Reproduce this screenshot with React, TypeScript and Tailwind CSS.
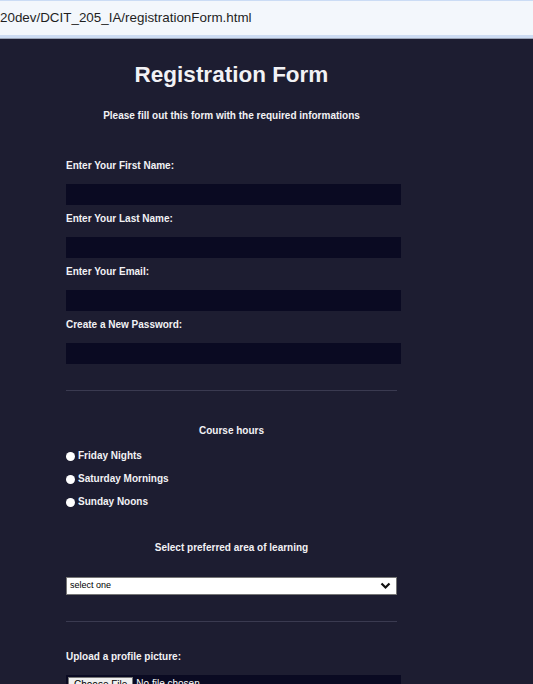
import { useState } from "react";

const textCls = "block text-[10px] leading-[14px] font-bold text-[#f2f2f5]";

/** Address bar strip from the browser chrome. */
function AddressBar() {
  return (
    <div className="border-t border-[#cbdcf5]">
      <div className="h-[34px] bg-[#f3f7fc] flex items-center text-[13.4px] text-[#1f1f1f] [font-family:'Liberation_Sans',sans-serif] whitespace-nowrap">
        20dev/DCIT_205_IA/registrationForm.html
      </div>
      <div className="h-[4px] bg-[#cddcf3] border-b border-[#9aa3b5]" />
    </div>
  );
}

function TextField({ label, type = "text" }: { label: string; type?: string }) {
  return (
    <div>
      <label className={textCls}>{label}</label>
      <input
        type={type}
        className="mt-[11px] block w-[335px] h-[21px] bg-[#0a0a22] outline-none"
      />
    </div>
  );
}

export default function App() {
  const [hours, setHours] = useState("");

  return (
    <div className="w-[533px] h-[684px] overflow-hidden bg-[#1d1d31]">
      <AddressBar />
      <div className="ml-[66px] w-[331px] pt-[21px] text-[#f2f2f5] [font-family:'Liberation_Sans',Arial,sans-serif]">
        <h1 className="text-center text-[22.5px] font-bold leading-[30px]">
          Registration Form
        </h1>
        <p className={"mt-[19px] text-center " + textCls}>
          Please fill out this form with the required informations
        </p>

        <div className="mt-[36px] flex flex-col gap-[7px]">
          <TextField label="Enter Your First Name:" />
          <TextField label="Enter Your Last Name:" />
          <TextField label="Enter Your Email:" type="email" />
          <TextField label="Create a New Password:" type="password" />
        </div>

        <hr className="mt-[26px] border-t border-[#3a3a50]" />

        <p className={"mt-[33px] text-center " + textCls}>Course hours</p>
        <div className="mt-[11px] flex flex-col gap-[9px]">
          {["Friday Nights", "Saturday Mornings", "Sunday Noons"].map((h) => (
            <label
              key={h}
              onClick={() => setHours(h)}
              className={"flex items-center gap-[3px] " + textCls}
            >
              <span className="w-[9px] h-[9px] rounded-full bg-white flex items-center justify-center">
                {hours === h && (
                  <span className="w-[5px] h-[5px] rounded-full bg-[#1d1d31]" />
                )}
              </span>
              {h}
            </label>
          ))}
        </div>

        <p className={"mt-[32px] text-center " + textCls}>
          Select preferred area of learning
        </p>
        <div className="mt-[22px] relative h-[18px] bg-white border border-[#767676] flex items-center">
          <span className="pl-[3px] text-[9px] text-black">select one</span>
          <svg
            className="absolute right-[5px] top-[4px]"
            width="11"
            height="8"
            viewBox="0 0 11 8"
          >
            <path
              d="M1.5 1.5 L5.5 5.5 L9.5 1.5"
              stroke="#111"
              strokeWidth="2.2"
              fill="none"
            />
          </svg>
        </div>

        <hr className="mt-[26px] border-t border-[#3a3a50]" />

        <label className={"mt-[28px] " + textCls}>Upload a profile picture:</label>
        <div className="mt-[11px] w-[335px] h-[20px] bg-[#0a0a22] flex items-start">
          <span className="ml-[2px] mt-[2px] px-[5px] h-[16px] leading-[14px] bg-[#efefef] border border-[#767676] text-[10px] text-black">
            Choose File
          </span>
          <span className="ml-[3px] mt-[2px] leading-[14px] text-[10px] text-white">
            No file chosen
          </span>
        </div>
      </div>
    </div>
  );
}
